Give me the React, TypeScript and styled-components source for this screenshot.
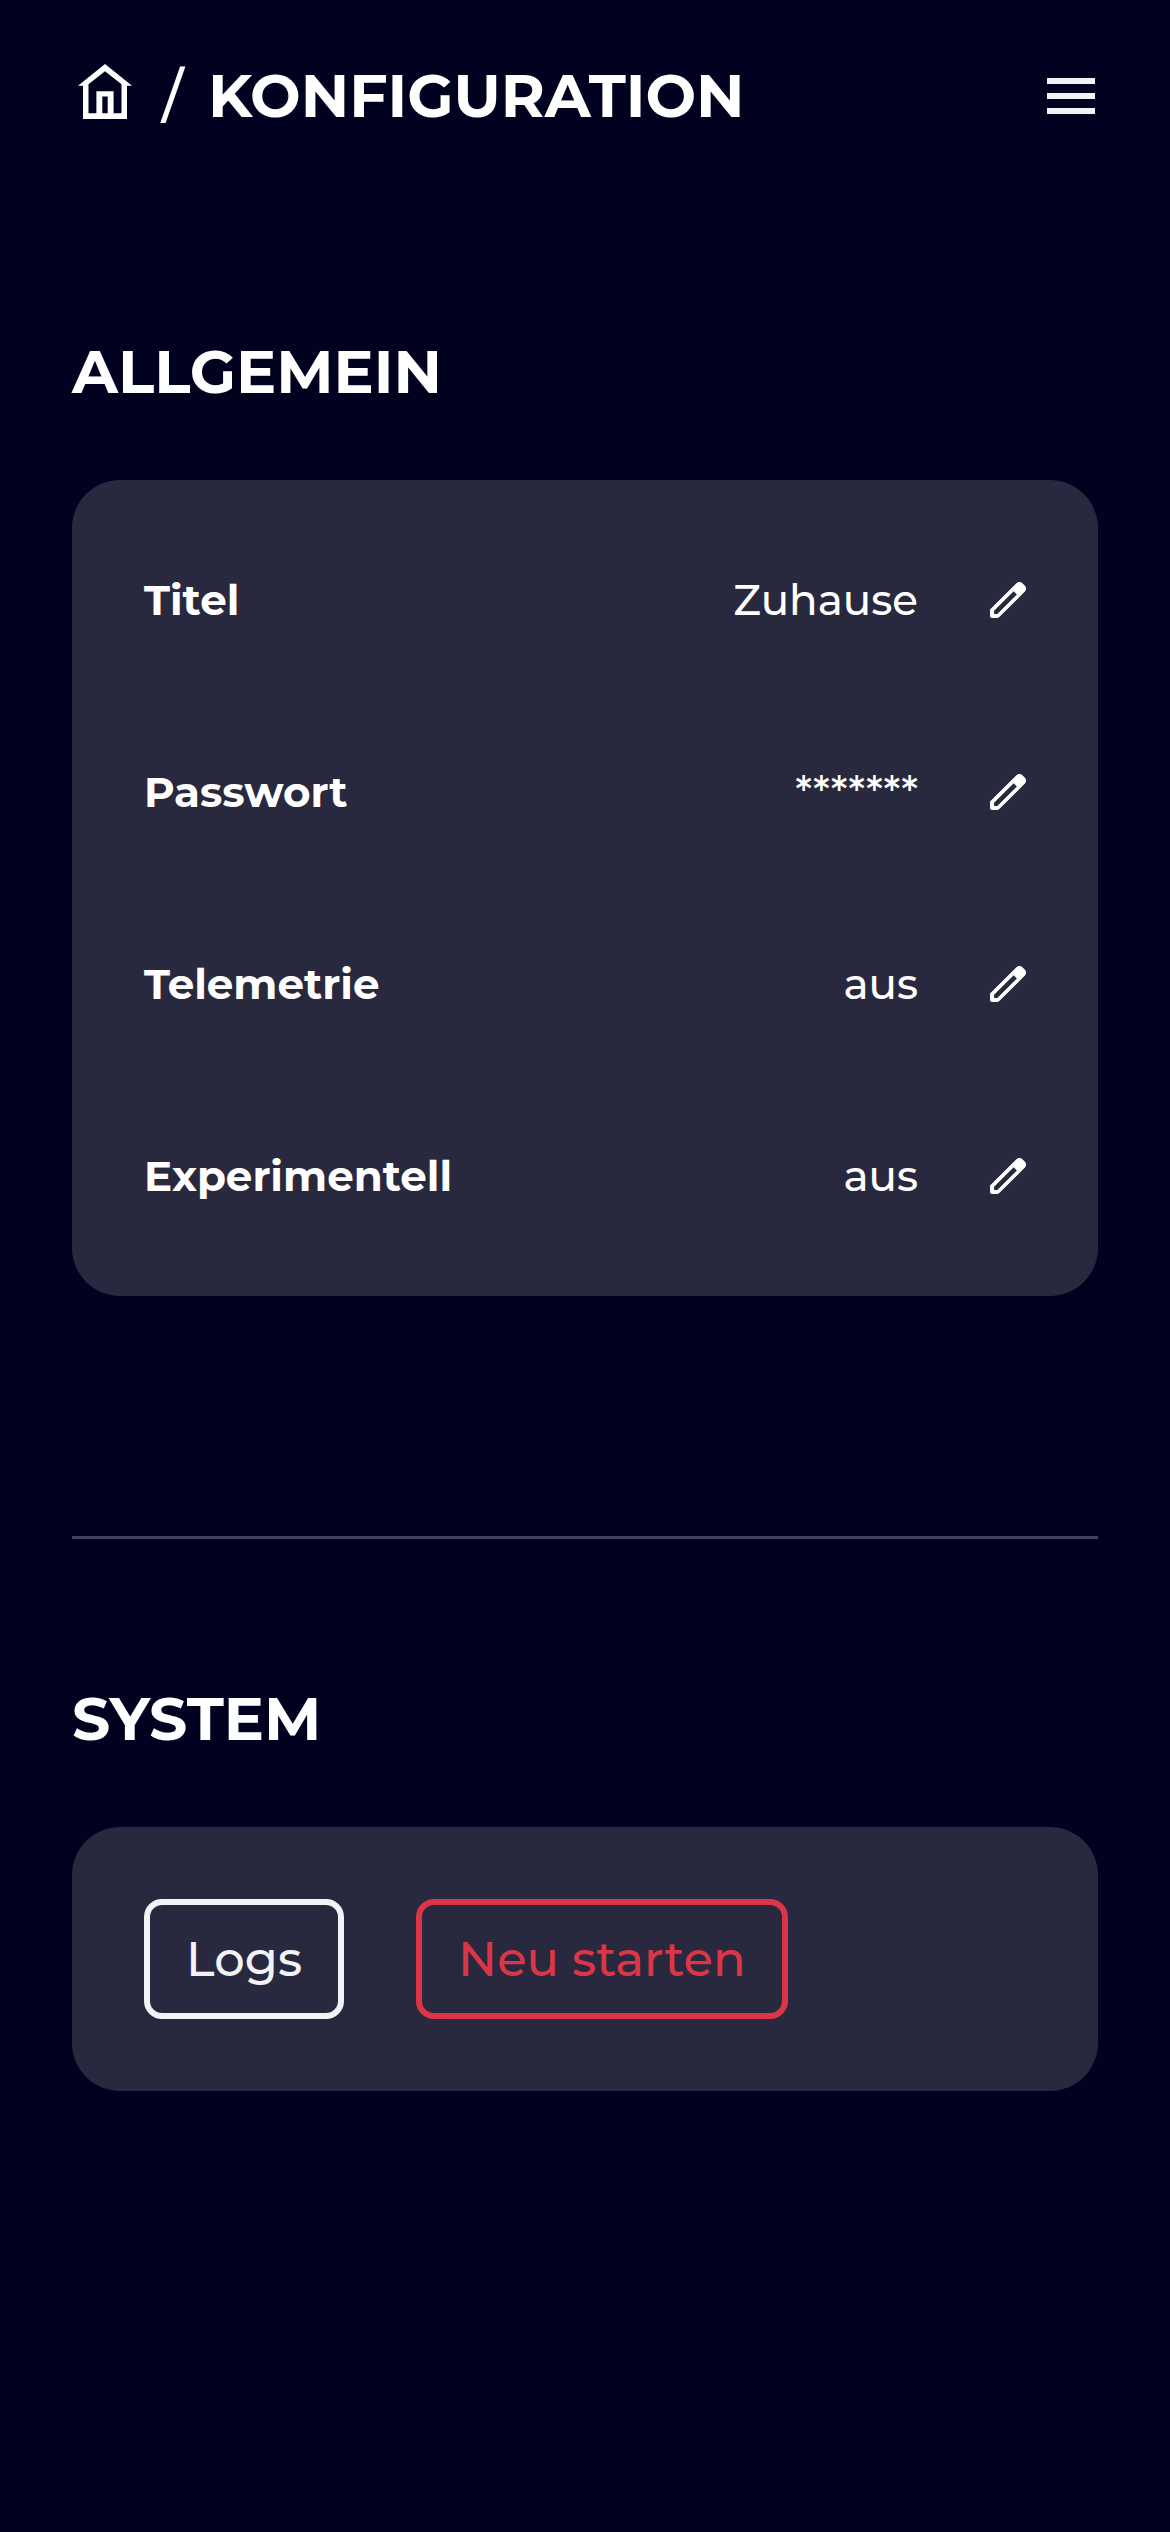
import React from 'react';
import styled, { createGlobalStyle } from 'styled-components';

const GlobalStyle = createGlobalStyle`
  * { box-sizing: border-box; }
  body {
    margin: 0;
    background: #000220;
    color: #ffffff;
    font-family: Montserrat, Inter, sans-serif;
    font-size: 42px;
    font-weight: 500;
  }
`;

const Page = styled.div`
  min-height: 2532px;
  padding: 60px 72px;
`;

const Header = styled.header`
  display: flex;
  align-items: center;
  height: 72px;
`;

const HomeLink = styled.a`
  display: flex;
  width: 66px;
  height: 66px;
  margin: 0 24px 0 0;
  color: inherit;
`;

const Slash = styled.span`
  width: 46px;
  font-size: 60px;
  font-weight: 500;
  line-height: 72px;
`;

const Heading = styled.h1`
  margin: 0;
  font-size: 60px;
  font-weight: 700;
  line-height: 72px;
  text-transform: uppercase;
`;

const MenuButton = styled.button`
  display: flex;
  flex-direction: column;
  gap: 9px;
  margin: 0 3px 0 auto;
  padding: 0;
  border: 0;
  background: none;
`;

const MenuBar = styled.span`
  width: 48px;
  height: 6px;
  background: #f3f3f7;
`;

const Section = styled.section<{ $top: number }>`
  display: flex;
  flex-direction: column;
  gap: 72px;
  margin-top: ${(p) => p.$top}px;
`;

const Card = styled.div<{ $pad: string }>`
  padding: ${(p) => p.$pad};
  border-radius: 48px;
  background: #28293e;
`;

const Row = styled.div`
  display: flex;
  align-items: center;
  height: 192px;
  line-height: 60px;
`;

const Label = styled.span`
  flex: 1;
  font-weight: 700;
`;

const Value = styled.span`
  margin-right: 72px;
`;

const EditButton = styled.button`
  display: flex;
  padding: 0;
  border: 0;
  background: none;
  color: inherit;
`;

const Divider = styled.hr`
  height: 3px;
  margin: 240px 0 0;
  border: 0;
  background: #43425a;
`;

const Actions = styled.div`
  display: flex;
  gap: 72px;
`;

const ActionButton = styled.button<{ $color: string }>`
  height: 120px;
  padding: 0 36px;
  border: 6px solid ${(p) => p.$color};
  border-radius: 18px;
  background: none;
  color: ${(p) => p.$color};
  font: 500 48px/72px Montserrat, Inter, sans-serif;
  letter-spacing: 0.06px;
`;

const HomeIcon = () => (
  <svg width="66" height="66" viewBox="0 0 66 66" fill="currentColor" aria-hidden="true">
    <path
      fillRule="evenodd"
      d="M33 1 60 22.8H55V56H11V22.8H6ZM33 8.2 16.5 21.2V50.2H24.4V28.2H41.6V50.2H49.5V21.2ZM30.3 33.5V50.2H35.7V33.5Z"
    />
  </svg>
);

const PencilIcon = () => (
  <svg width="36" height="36" viewBox="0 0 36 36" fill="currentColor" aria-hidden="true">
    <path
      fillRule="evenodd"
      d="M0 27.6 26.4 1.2Q29.4-1.2 32.4 1.2L34.9 3.7Q37.3 6.5 34.9 9.5L9.3 35.1Q8.3 36 6.8 36H2Q0 36 0 34ZM23.7 9.2 4.1 28.8V32H7.3L26.9 12.4Z"
    />
  </svg>
);

const settings = [
  { label: 'Titel', value: 'Zuhause' },
  { label: 'Passwort', value: '*******' },
  { label: 'Telemetrie', value: 'aus' },
  { label: 'Experimentell', value: 'aus' },
];

export default function App() {
  return (
    <>
      <GlobalStyle />
      <Page>
        <Header>
          <HomeLink aria-label="Home">
            <HomeIcon />
          </HomeLink>
          <Slash>/</Slash>
          <Heading>Konfiguration</Heading>
          <MenuButton aria-label="Menü">
            <MenuBar />
            <MenuBar />
            <MenuBar />
          </MenuButton>
        </Header>

        <Section $top={204}>
          <Heading as="h2">Allgemein</Heading>
          <Card $pad="24px 72px">
            {settings.map((s) => (
              <Row key={s.label}>
                <Label>{s.label}</Label>
                <Value>{s.value}</Value>
                <EditButton aria-label={`${s.label} bearbeiten`}>
                  <PencilIcon />
                </EditButton>
              </Row>
            ))}
          </Card>
        </Section>

        <Divider />

        <Section $top={144}>
          <Heading as="h2">System</Heading>
          <Card $pad="72px">
            <Actions>
              <ActionButton $color="#f3f3f7">Logs</ActionButton>
              <ActionButton $color="#dc3545">Neu starten</ActionButton>
            </Actions>
          </Card>
        </Section>
      </Page>
    </>
  );
}
